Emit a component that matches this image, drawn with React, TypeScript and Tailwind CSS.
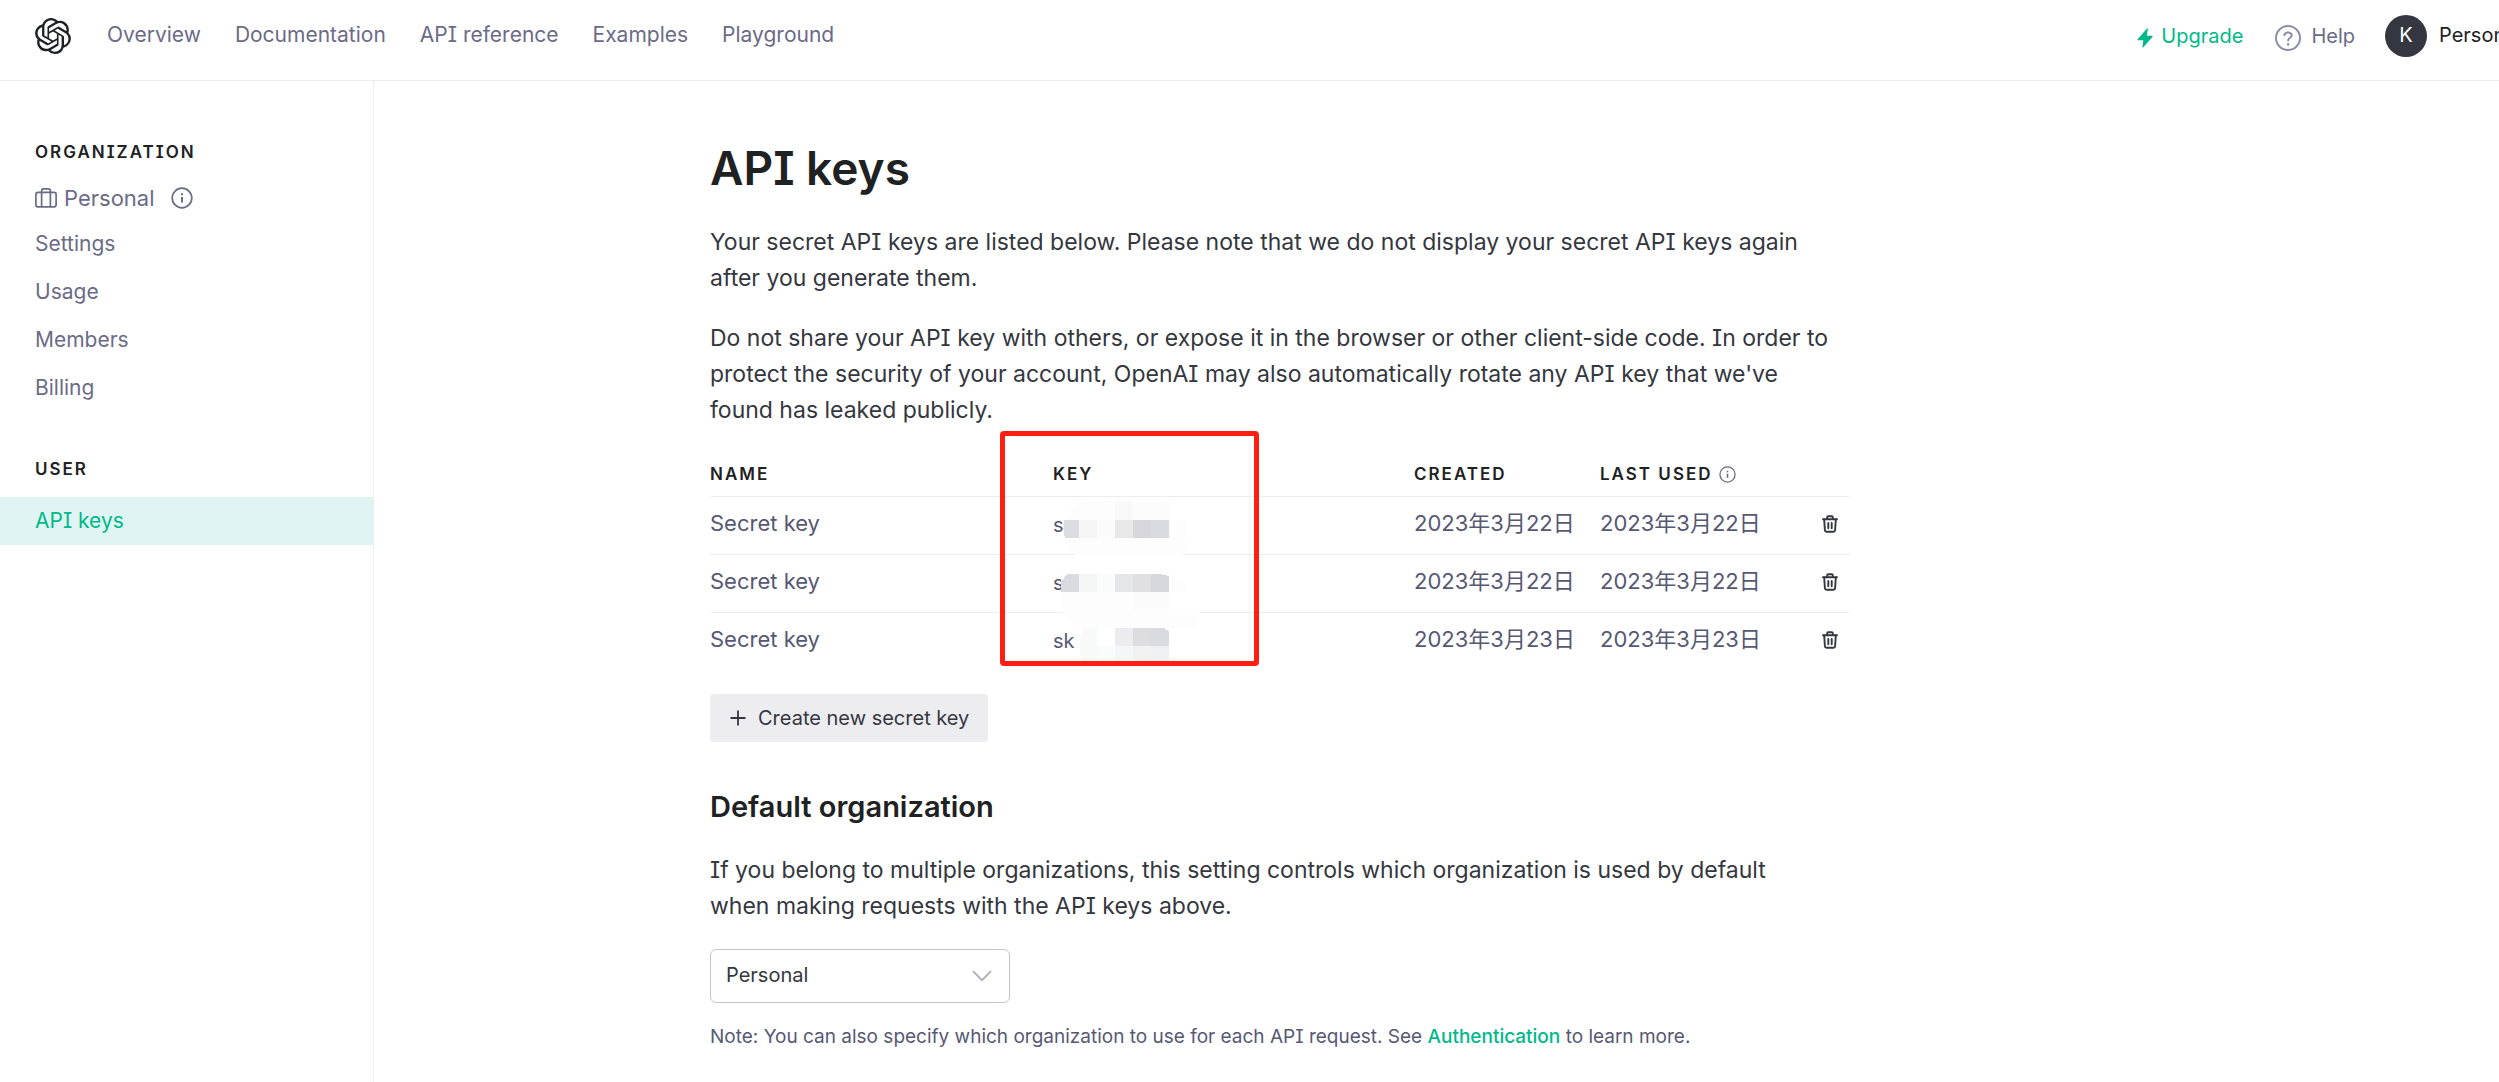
import type { ReactNode } from 'react';
import { SiOpenai } from 'react-icons/si';

const topLinks = ['Overview', 'Documentation', 'API reference', 'Examples', 'Playground'];
const orgLinks = ['Settings', 'Usage', 'Members', 'Billing'];
const keys = [
  { prefix: 's', created: '2023年3月22日', used: '2023年3月22日' },
  { prefix: 's', created: '2023年3月22日', used: '2023年3月22日' },
  { prefix: 'sk', created: '2023年3月23日', used: '2023年3月23日' },
];

function InfoIcon({ className }: { className: string }) {
  return (
    <svg viewBox="0 0 22 22" className={className} fill="none" stroke="currentColor" aria-hidden="true">
      <circle cx="11" cy="11" r="9.8" strokeWidth="1.7" />
      <path d="M11 10v5.4" strokeWidth="2" />
      <path d="M11 6.2v2" strokeWidth="2" />
    </svg>
  );
}

function BriefcaseIcon() {
  return (
    <svg viewBox="0 0 22 20" className="h-5 w-[22px]" fill="none" stroke="currentColor" strokeWidth="1.7" aria-hidden="true">
      <rect x="0.9" y="4.4" width="20.2" height="14.4" rx="2" />
      <path d="M6.6 18.8V2.9a2 2 0 0 1 2-2h4.8a2 2 0 0 1 2 2v15.9" />
    </svg>
  );
}

function TrashIcon() {
  return (
    <svg viewBox="0 0 16 18" className="h-[18px] w-4" fill="none" stroke="currentColor" strokeWidth="1.9" strokeLinecap="round" strokeLinejoin="round" aria-hidden="true">
      <path d="M1 4.3h14" />
      <path d="M5.2 4V2.2a1 1 0 0 1 1-1h3.6a1 1 0 0 1 1 1V4" />
      <path d="M2.2 4.5l.7 10.7a1.6 1.6 0 0 0 1.6 1.5h7a1.6 1.6 0 0 0 1.6-1.5l.7-10.7" />
      <path d="M6.3 8v5.2M9.7 8v5.2" />
    </svg>
  );
}

/* Pixelated patches that hide the secret part of each key */
function Redaction() {
  return (
    <svg viewBox="0 0 900 780" className="h-[260px] w-[300px]" shapeRendering="crispEdges" aria-hidden="true">
      <path d="M297 246q30-8 108-8l162 8v54h54v54h12q-8 36-28 54H292q-30-16-40-54v-50q6-28 45-58z" fill="#fdfdfd" />
      <path d="M253 300h44v54h-42q-8-28-2-54z" fill="#dcdde3" />
      <path d="M297 300h54v54h-54z" fill="#f6f6f7" />
      <path d="M351 300h54v54h-54z" fill="#fbfbfc" />
      <path d="M405 246h54v54h-54z" fill="#f9f9fa" />
      <path d="M459 246h108v54H459z" fill="#fcfcfc" />
      <path d="M405 300h54v54h-54z" fill="#e9e9eb" />
      <path d="M459 300h54v54h-54z" fill="#d8d7dd" />
      <path d="M513 300h54v54h-54z" fill="#dadbe0" />

      <path d="M243 462h324l54 30v24h-54v54h94q-2 28-16 54H310q-40-14-64-50l-3-58z" fill="#fdfdfd" />
      <path d="M261 462h36v54h-54v-30z" fill="#dadbe1" />
      <path d="M297 462h54v54h-54z" fill="#f4f5f5" />
      <path d="M351 462h54v54h-54z" fill="#fafbfb" />
      <path d="M405 462h54v54h-54z" fill="#e4e6ea" />
      <path d="M459 462h54v54h-54z" fill="#dfdfe4" />
      <path d="M513 462h28l26 6v48h-54z" fill="#d7d8de" />
      <path d="M459 516h108v54H459z" fill="#fbfbfb" />

      <path d="M310 624h41v99h-45q-16-50 4-99z" fill="#f8f9f9" />
      <path d="M405 624h54v54h-54z" fill="#ececee" />
      <path d="M459 624h54v54h-54z" fill="#dcdce1" />
      <path d="M513 624h40l14 10v44h-54z" fill="#dadbe0" />
      <path d="M351 678h54v45h-54z" fill="#fafbfb" />
      <path d="M405 678h54v45h-54z" fill="#f5f6f7" />
      <path d="M459 678h54v45h-54z" fill="#f2f2f3" />
      <path d="M513 678h54v45h-54z" fill="#eff0f3" />
    </svg>
  );
}

function Th({ children, className = '' }: { children?: ReactNode; className?: string }) {
  return (
    <th className={`border-b border-[#ececf1] p-0 pt-3 pb-[10px] text-left text-[17px] leading-6 font-semibold tracking-[2px] text-[#202123] ${className}`}>
      {children}
    </th>
  );
}

export default function App() {
  return (
    <div className="flex min-h-screen flex-col overflow-hidden bg-white font-['Inter','Noto_Sans_CJK_SC',sans-serif] text-[#353740] [font-feature-settings:'cv08']">
      <header className="flex h-[81px] items-start border-b border-[#ececf1] pt-[15px] pl-[35px]">
        <a href="#home" aria-label="OpenAI" className="mt-[3px] text-[#202123]">
          <SiOpenai className="size-9" />
        </a>
        <nav className="ml-9 flex gap-[34px] pt-1 text-[21px] leading-8 text-[#6b6b87]">
          {topLinks.map((l) => (
            <a key={l} href="#nav">{l}</a>
          ))}
        </nav>
        <div className="ml-auto flex text-xl leading-10">
          <a href="#upgrade" className="flex items-center gap-2 text-[#00b98a]">
            <svg viewBox="0 0 16 20" className="mt-1 h-5 w-4" fill="currentColor" aria-hidden="true">
              <path d="M10 .4 0.6 11.2a.6.6 0 0 0 .5 1H6.3L5.5 18.8a.5.5 0 0 0 .9.5L15.6 8.8a.6.6 0 0 0-.5-1H9.8L10.9.8a.5.5 0 0 0-.9-.4z" />
            </svg>
            Upgrade
          </a>
          <a href="#help" className="ml-8 flex items-center gap-[10px] text-[#6b6b87]">
            <svg viewBox="0 0 26 26" className="mt-1 size-[26px] text-[#8e8ea9]" fill="none" stroke="currentColor" strokeWidth="2" strokeLinecap="round" aria-hidden="true">
              <circle cx="13" cy="13" r="12" />
              <path d="M9.3 10.2a3.8 3.3 0 0 1 7.5 0c0 2.400-3.700 2.700-3.700 5.200" />
              <path d="M13.1 19.3v.3" strokeWidth="2.4" />
            </svg>
            Help
          </a>
          <button type="button" className="ml-[30px] flex w-[114px] items-start gap-3 whitespace-nowrap text-[#202123]">
            <span className="size-[42px] shrink-0 rounded-full bg-[#353740] text-center text-white">K</span>
            <span>Personal</span>
          </button>
        </div>
      </header>

      <div className="flex grow">
        <aside className="w-[374px] shrink-0 border-r border-[#ececf1] pt-[59px] text-[21px] text-[#6b6b87]">
          <h2 className="px-[35px] text-[17px] leading-6 font-semibold tracking-[2px] text-[#202123]">ORGANIZATION</h2>
          <div className="mt-[14px] flex items-center px-[35px] text-[22px] leading-10">
            <BriefcaseIcon />
            <span className="ml-[7px]">Personal</span>
            <InfoIcon className="ml-4 size-[22px]" />
          </div>
          <nav className="mt-[2px]">
            {orgLinks.map((l) => (
              <a key={l} href="#org" className="block px-[35px] leading-[48px]">{l}</a>
            ))}
          </nav>
          <h2 className="mt-[45px] px-[35px] text-[17px] leading-6 font-semibold tracking-[2px] text-[#202123]">USER</h2>
          <a href="#keys" aria-current="page" className="mt-4 block bg-[#e0f4f3] px-[35px] leading-[48px] text-[#00b98a]">API keys</a>
        </aside>

        <main className="grow pt-[59px] pr-[313px]">
          <div className="mx-auto max-w-[1140px]">
            <h1 className="text-[46px] leading-[56px] font-semibold text-[#202123]">API keys</h1>
            <p className="mt-7 pr-4 text-[23px] leading-9">
              Your secret API keys are listed below. Please note that we do not display your secret API keys again after you generate them.
            </p>
            <p className="mt-6 pr-4 text-[23px] leading-9">
              Do not share your API key with others, or expose it in the browser or other client-side code. In order to protect the security of your account, OpenAI may also automatically rotate any API key that we've found has leaked publicly.
            </p>

            <div className="relative mt-[22px]">
              <table className="w-full table-fixed border-separate border-spacing-0 text-[22px] leading-9 text-[#565874]">
                <thead>
                  <tr>
                    <Th className="w-[343px]">NAME</Th>
                    <Th>KEY</Th>
                    <Th className="w-[186px]">CREATED</Th>
                    <Th className="w-[200px]">
                      <span className="flex items-center gap-[6px]">
                        LAST USED
                        <InfoIcon className="size-[17px] text-[#6b6b87]" />
                      </span>
                    </Th>
                    <Th className="w-[50px]" />
                  </tr>
                </thead>
                <tbody className="[&>tr:not(:last-child)>td]:border-b [&>tr>td]:border-[#ececf1]">
                  {keys.map((k, i) => (
                    <tr key={i} className="h-[58px] align-top">
                      <td className="p-0 pt-2">Secret key</td>
                      <td className="p-0 pt-[10px] text-xl leading-9">{k.prefix}</td>
                      <td className="p-0 pt-2">{k.created}</td>
                      <td className="p-0 pt-2">{k.used}</td>
                      <td className="p-0 pt-[18px]">
                        <button type="button" aria-label="Delete key" className="ml-[22px] block text-[#353740]">
                          <TrashIcon />
                        </button>
                      </td>
                    </tr>
                  ))}
                </tbody>
              </table>
              <div className="pointer-events-none absolute -top-[30px] left-[270px]">
                <Redaction />
              </div>
              <div className="pointer-events-none absolute -top-[19px] left-[290px] h-[235px] w-[259px] rounded border-[5px] border-[#ff1f12]" />
            </div>

            <button type="button" className="mt-[23px] flex h-12 items-center gap-3 rounded bg-[#ececf1] pr-[19px] pb-px pl-5 text-xl">
              <svg viewBox="0 0 16 16" className="size-4" stroke="currentColor" strokeWidth="1.8" aria-hidden="true">
                <path d="M8 .5v15M.5 8h15" />
              </svg>
              Create new secret key
            </button>

            <h2 className="mt-[47px] text-[29px] leading-9 font-semibold text-[#202123]">Default organization</h2>
            <p className="mt-[27px] pr-8 text-[23px] leading-9">
              If you belong to multiple organizations, this setting controls which organization is used by default when making requests with the API keys above.
            </p>
            <div className="relative mt-[25px] w-[300px]">
              <select aria-label="Default organization" className="h-[54px] w-full appearance-none rounded-md border border-[#c5c5d2] bg-white px-[15px] pb-[2px] text-xl">
                <option>Personal</option>
              </select>
              <svg viewBox="0 0 20 12" className="pointer-events-none absolute top-[21px] right-[18px] h-3 w-5" fill="none" stroke="#acacbe" strokeWidth="1.8" aria-hidden="true">
                <path d="M1 1.2l9 9 9-9" />
              </svg>
            </div>
            <p className="mt-5 text-[19px] leading-7 text-[#565874]">
              Note: You can also specify which organization to use for each API request. See{' '}
              <a href="#authentication" className="font-medium text-[#00b98a]">Authentication</a> to learn more.
            </p>
          </div>
        </main>
      </div>
    </div>
  );
}
